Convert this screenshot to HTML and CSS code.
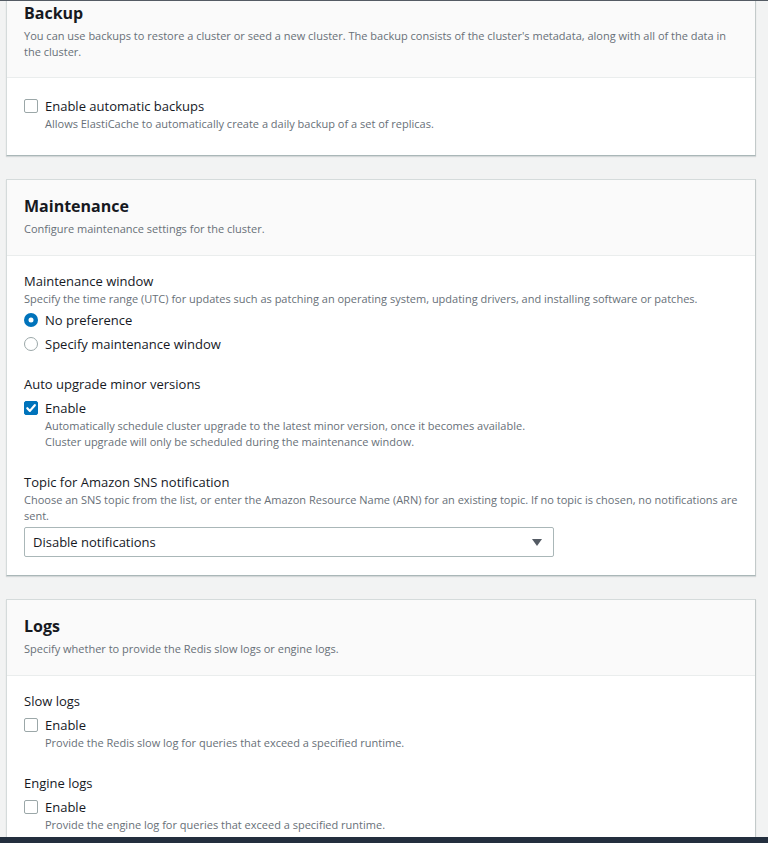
FILE: index.html
```html
<!DOCTYPE html>
<html lang="en">
<head>
<meta charset="utf-8">
<title>Cluster settings</title>
<link rel="stylesheet" href="styles.css">
</head>
<body>
<div class="page">
  <section class="card card-first">
    <header class="card-header">
      <h2 class="card-title">Backup</h2>
      <p class="card-desc">You can use backups to restore a cluster or seed a new cluster. The backup consists of the cluster's metadata, along with all of the data in the cluster.</p>
    </header>
    <div class="card-body body-check">
      <div class="check-row">
        <span class="checkbox"></span>
        <span class="check-label">Enable automatic backups</span>
      </div>
      <p class="check-desc">Allows ElastiCache to automatically create a daily backup of a set of replicas.</p>
    </div>
  </section>

  <section class="card">
    <header class="card-header">
      <h2 class="card-title">Maintenance</h2>
      <p class="card-desc">Configure maintenance settings for the cluster.</p>
    </header>
    <div class="card-body body-form">
      <div class="field">
        <div class="field-label">Maintenance window</div>
        <p class="field-desc">Specify the time range (UTC) for updates such as patching an operating system, updating drivers, and installing software or patches.</p>
        <div class="radio-group">
          <div class="radio-row">
            <svg class="radio" width="14" height="14" viewBox="0 0 14 14"><circle cx="7" cy="7" r="7" fill="#0073bb"/><circle cx="7" cy="7" r="2.5" fill="#ffffff"/></svg>
            <span class="check-label">No preference</span>
          </div>
          <div class="radio-row">
            <svg class="radio" width="14" height="14" viewBox="0 0 14 14"><circle cx="7" cy="7" r="6.5" fill="#ffffff" stroke="#9ba7a8" stroke-width="1"/></svg>
            <span class="check-label">Specify maintenance window</span>
          </div>
        </div>
      </div>
      <div class="field">
        <div class="field-label">Auto upgrade minor versions</div>
        <div class="check-row">
          <span class="checkbox checked"><svg width="14" height="14" viewBox="0 0 14 14"><polyline points="3.3,7.2 5.9,9.9 10.8,4.2" fill="none" stroke="#ffffff" stroke-width="2.2" stroke-linecap="round" stroke-linejoin="round"/></svg></span>
          <span class="check-label">Enable</span>
        </div>
        <p class="check-desc">Automatically schedule cluster upgrade to the latest minor version, once it becomes available.<br>Cluster upgrade will only be scheduled during the maintenance window.</p>
      </div>
      <div class="field">
        <div class="field-label">Topic for Amazon SNS notification</div>
        <p class="field-desc">Choose an SNS topic from the list, or enter the Amazon Resource Name (ARN) for an existing topic. If no topic is chosen, no notifications are sent.</p>
        <div class="select">
          <span class="select-value">Disable notifications</span>
          <svg class="caret" width="10" height="7" viewBox="0 0 10 7"><polygon points="0,0 10,0 5,7" fill="#545b64"/></svg>
        </div>
      </div>
    </div>
  </section>

  <section class="card">
    <header class="card-header">
      <h2 class="card-title">Logs</h2>
      <p class="card-desc">Specify whether to provide the Redis slow logs or engine logs.</p>
    </header>
    <div class="card-body body-form body-last">
      <div class="field">
        <div class="field-label">Slow logs</div>
        <div class="check-row">
          <span class="checkbox"></span>
          <span class="check-label">Enable</span>
        </div>
        <p class="check-desc">Provide the Redis slow log for queries that exceed a specified runtime.</p>
      </div>
      <div class="field">
        <div class="field-label">Engine logs</div>
        <div class="check-row">
          <span class="checkbox"></span>
          <span class="check-label">Enable</span>
        </div>
        <p class="check-desc">Provide the engine log for queries that exceed a specified runtime.</p>
      </div>
    </div>
  </section>
</div>
<div class="footer-bar"></div>
</body>
</html>
```
FILE: styles.css
```css
html, body {
  margin: 0;
  padding: 0;
  background: #f2f3f3;
}

body {
  font-family: "Open Sans", "Noto Sans", sans-serif;
  color: #16191f;
  height: 843px;
  overflow: hidden;
}

.page {
  border-top: 1px solid #545b64;
  overflow: hidden;
  padding: 0 12px 0 6px;
}

.card {
  background: #ffffff;
  border: 1px solid #d5dbdb;
  border-right-color: #c3caca;
  border-bottom-color: #aab7b8;
  box-shadow: 0 1px 1px rgba(0, 28, 36, 0.12);
  margin-bottom: 23px;
}

.card-first {
  margin-top: -15px;
}

.card-header {
  background: #fafafa;
  border-bottom: 1px solid #eaeded;
  padding: 15px 17px 18px;
}

.card-first .card-header {
  padding-bottom: 17px;
}

.card-title {
  margin: 0;
  font-size: 16px;
  line-height: 22px;
  font-weight: 700;
  color: #16191f;
}

.card-desc {
  margin: 4px 0 0;
  font-size: 11px;
  line-height: 16px;
  color: #687078;
}

.card-body {
  padding: 15px 17px 18px;
}

.body-check {
  padding-top: 18px;
  padding-bottom: 23px;
}

.body-last {
  padding-bottom: 60px;
}

.field + .field {
  margin-top: 18px;
}

.field-label {
  font-size: 13px;
  line-height: 20px;
  color: #16191f;
}

.field-desc {
  margin: 0;
  font-size: 11px;
  line-height: 16px;
  color: #687078;
}

.radio-group {
  margin-top: 1px;
  display: flex;
  flex-direction: column;
}

.radio-row {
  display: flex;
  align-items: center;
  gap: 7px;
  height: 24px;
}

.radio {
  display: block;
  flex: none;
}

.check-row {
  display: flex;
  align-items: center;
  gap: 7px;
  height: 20px;
}

.field .check-row {
  margin-top: 4px;
}

.checkbox {
  flex: none;
  width: 14px;
  height: 14px;
  box-sizing: border-box;
  border: 1px solid #9ba7a8;
  border-radius: 2px;
  background: #ffffff;
  display: flex;
  align-items: center;
  justify-content: center;
}

.checkbox.checked {
  background: #0073bb;
  border-color: #0073bb;
}

.checkbox svg {
  display: block;
  flex: none;
}

.check-label {
  font-size: 13px;
  line-height: 20px;
  color: #16191f;
}

.check-desc {
  margin: 0;
  padding-left: 21px;
  padding-bottom: 4px;
  font-size: 11px;
  line-height: 16px;
  color: #687078;
}

.body-check .check-desc {
  padding-bottom: 0;
}

.select {
  margin-top: 3px;
  width: 530px;
  height: 30px;
  box-sizing: border-box;
  border: 1px solid #aab7b8;
  border-radius: 2px;
  background: #ffffff;
  display: flex;
  align-items: center;
  justify-content: space-between;
  padding: 0 11px 0 8px;
}

.select-value {
  font-size: 13px;
  line-height: 20px;
  color: #16191f;
}

.caret {
  display: block;
}

.footer-bar {
  position: fixed;
  left: 0;
  right: 0;
  bottom: 0;
  height: 6px;
  background: #232f3e;
}
```
